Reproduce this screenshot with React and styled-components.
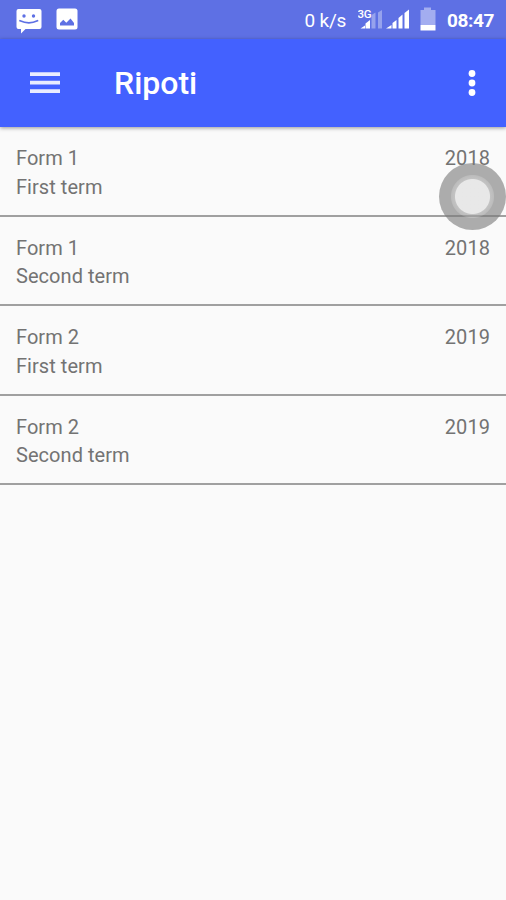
import React from 'react'
import styled, { createGlobalStyle } from 'styled-components'

const reports = [
  { id: 1, form: 'Form 1', term: 'First term', year: '2018' },
  { id: 2, form: 'Form 1', term: 'Second term', year: '2018' },
  { id: 3, form: 'Form 2', term: 'First term', year: '2019' },
  { id: 4, form: 'Form 2', term: 'Second term', year: '2019' },
]

function MessageIcon() {
  return (
    <svg width="26" height="26" viewBox="0 0 26 26">
      <path fill="#fff" d="M2.500 1h21a2 2 0 0 1 2 2v16a2 2 0 0 1-2 2H9.500L5 25.500V21H2.500a2 2 0 0 1-2-2V3a2 2 0 0 1 2-2z" />
      <circle cx="8" cy="8" r="1.700" fill="#5e70e4" />
      <circle cx="17.500" cy="8" r="1.700" fill="#5e70e4" />
      <path d="M4 12.800q9 4 17.500 0" fill="none" stroke="#5e70e4" strokeWidth="1.800" strokeLinecap="round" />
    </svg>
  )
}

function PictureIcon() {
  return (
    <svg width="22" height="22" viewBox="0 0 22 22">
      <rect x=".5" y=".5" width="21" height="21" rx="2.500" fill="#fff" />
      <path fill="#5e70e4" d="M4 17.500v-2.500l3.300-3.200 3 3 4.200-4.300 3.500 4.500v2.500z" />
    </svg>
  )
}

function SignalIcons() {
  return (
    <svg width="54" height="24" viewBox="0 0 54 24">
      <g fill="#fff">
        <path d="M2.500 20.500l4.500-3v3z" />
        <path d="M7.500 15.500l4.500-3.500v8.500H7.500z" />
        <path opacity=".35" d="M13.500 7l4-2.500v16h-4z" />
        <path opacity=".35" d="M20 4.500L24 2v18.500h-4z" />
        <path d="M28 20.500l5.500-3.500v3.500z" />
        <path d="M34.500 15l4-3v8.500h-4z" />
        <path d="M40.500 10L44.500 6.500v14h-4z" />
        <path d="M46.500 5l4.500-3.500v19h-4.500z" />
      </g>
      <NetworkType x="-.5" y="10">3G</NetworkType>
    </svg>
  )
}

function BatteryIcon() {
  return (
    <svg width="16" height="24" viewBox="0 0 16 24">
      <path fill="#fff" opacity=".43" d="M.5 3H4V.5h7V3h4.500v15H.5z" />
      <path fill="#fff" d="M.5 18h15v5.500H.5z" />
    </svg>
  )
}

function App() {
  return (
    <>
      <GlobalStyle />
      <Screen>
        <StatusBar>
          <Notifications>
            <MessageIcon />
            <PictureIcon />
          </Notifications>
          <SystemInfo>
            <Speed>0 k/s</Speed>
            <SignalIcons />
            <Battery>
              <BatteryIcon />
            </Battery>
            <Clock>08:47</Clock>
          </SystemInfo>
        </StatusBar>
        <Toolbar>
          <IconButton aria-label="Menu">
            <svg width="30" height="22" viewBox="0 0 30 22">
              <path stroke="#e9ecff" strokeWidth="3.800" d="M0 2.200h30M0 10.700h30M0 19.200h30" />
            </svg>
          </IconButton>
          <Title>Ripoti</Title>
          <IconButton aria-label="More">
            <svg width="8" height="28" viewBox="0 0 8 28">
              <g fill="#fff">
                <circle cx="4" cy="4.500" r="3.400" />
                <circle cx="4" cy="14" r="3.400" />
                <circle cx="4" cy="23.500" r="3.400" />
              </g>
            </svg>
          </IconButton>
        </Toolbar>
        <List>
          {reports.map((report) => (
            <Row key={report.id}>
              <div>
                <Label>{report.form}</Label>
                <Label>{report.term}</Label>
              </div>
              <Label>{report.year}</Label>
            </Row>
          ))}
        </List>
        <TouchBubble />
      </Screen>
    </>
  )
}

export default App


const GlobalStyle = createGlobalStyle`
  *{
    box-sizing: border-box;
  }
  body{
    margin: 0;
    background-color: #fafafa;
    font-family: Roboto, sans-serif;
  }
`

const Screen = styled.div`
  position: relative;
  width: 506px;
  height: 900px;
  overflow: hidden;
  background-color: #fafafa;
`

const StatusBar = styled.div`
  display: flex;
  justify-content: space-between;
  height: 39px;
  padding: 0 12px 0 16px;
  background-color: #5e70e4;
  color: #fff;
`

const Notifications = styled.div`
  display: flex;
  align-items: flex-start;
  gap: 14px;
  padding-top: 8px;
`

const SystemInfo = styled.div`
  display: flex;
  align-items: center;
  height: 40px;
`

const Speed = styled.span`
  margin-right: 12px;
  font-size: 19px;
  letter-spacing: -.25px;
`

const Battery = styled.div`
  display: flex;
  height: 26px;
  margin-left: 8px;
`

const Clock = styled.span`
  margin-left: 11px;
  font-size: 19px;
  font-weight: 700;
  letter-spacing: -.4px;
`

const NetworkType = styled.text`
  fill: #fff;
  font-size: 11.500px;
  font-weight: 500;
  letter-spacing: -.4px;
`

const Toolbar = styled.header`
  position: relative;
  display: flex;
  align-items: center;
  height: 88px;
  padding: 0 30px;
  background-color: #4361ff;
  box-shadow: 0 1px 4px rgba(0, 0, 0, .4);
`

const IconButton = styled.button`
  display: flex;
  padding: 0;
  border: 0;
  background: none;
`

const Title = styled.h1`
  flex: 1;
  margin: 0 0 0 54px;
  color: #fff;
  font-size: 32px;
  font-weight: 500;
`

const List = styled.div`
  display: flex;
  flex-direction: column;
`

const Row = styled.div`
  display: flex;
  justify-content: space-between;
  height: 89.500px;
  padding: 17px 16px 0;
  border-bottom: 2px solid #a0a0a0;
`

const Label = styled.p`
  margin: 0;
  color: #737373;
  font-size: 20px;
  line-height: 28.700px;
  letter-spacing: .05px;
`

// floating assistive touch button
const TouchBubble = styled.div`
  position: absolute;
  top: 163px;
  left: 439px;
  width: 67px;
  height: 67px;
  border-radius: 50%;
  background: radial-gradient(circle, rgba(230, 230, 230, .9) 17px, rgba(165, 165, 165, .65) 18px, rgba(155, 155, 155, .65) 21px, rgba(120, 120, 120, .6) 22px);
`
